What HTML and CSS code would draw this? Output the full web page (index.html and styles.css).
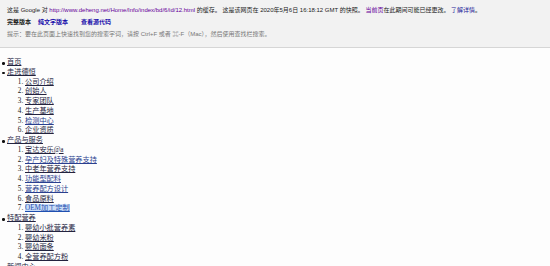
FILE: index.html
```html
<!DOCTYPE html>
<html lang="zh">
<head>
<meta charset="utf-8">
<title>德恒</title>
<link rel="stylesheet" href="styles.css">
</head>
<body>
<div class="cache-bar">
  <div class="cache-line">这是 Google 对 <a class="visited" href="#">http://www.deheng.net/Home/Info/index/bd/6/id/12.html</a> 的缓存。 这是该网页在 2020年5月6日 16:18:12 GMT 的快照。 <a class="visited" href="#">当前页</a>在此期间可能已经更改。 <a class="learn" href="#">了解详情</a>。</div>
  <div class="cache-line versions"><b>完整版本</b><a href="#">纯文字版本</a><a href="#">查看源代码</a></div>
  <div class="cache-line tip">提示：要在此页面上快速找到您的搜索字词，请按 Ctrl+F 或者 ⌘-F（Mac），然后使用查找栏搜索。</div>
</div>
<ul class="nav">
  <li><a href="#">首页</a></li>
  <li><a href="#">走进德恒</a>
    <ol>
      <li><a href="#">公司介绍</a></li>
      <li><a href="#">创始人</a></li>
      <li><a href="#">专家团队</a></li>
      <li><a href="#">生产基地</a></li>
      <li><a class="blue" href="#">检测中心</a></li>
      <li><a href="#">企业资质</a></li>
    </ol>
  </li>
  <li><a href="#">产品与服务</a>
    <ol>
      <li><a href="#">宝达安乐@a</a></li>
      <li><a class="blue" href="#">孕产妇及特殊营养支持</a></li>
      <li><a href="#">中老年营养支持</a></li>
      <li><a class="blue" href="#">功能型配料</a></li>
      <li><a class="blue" href="#">营养配方设计</a></li>
      <li><a href="#">食品原料</a></li>
      <li><a class="sel" href="#">OEM加工定制</a></li>
    </ol>
  </li>
  <li><a href="#">特配营养</a>
    <ol>
      <li><a href="#">婴幼小批营养素</a></li>
      <li><a href="#">婴幼米粉</a></li>
      <li><a href="#">婴幼面条</a></li>
      <li><a href="#">全营养配方粉</a></li>
    </ol>
  </li>
  <li><a href="#">新闻中心</a></li>
</ul>
</body>
</html>
```
FILE: styles.css
```css
html, body {
  margin: 0;
  padding: 0;
  background: #fdfdfd;
}
body {
  font-family: "Liberation Serif", "Noto Sans CJK SC", serif;
  color: #222;
}
.cache-bar {
  background: #f2f2f2;
  border-bottom: 1px solid #d6d6d6;
  padding: 4px 7px 6px;
  font-family: "Liberation Sans", "Noto Sans CJK SC", sans-serif;
  font-size: 6px;
  line-height: 12px;
  height: 37px;
  color: #222;
}
.cache-line a {
  text-decoration: none;
}
.cache-line a.visited {
  color: #660099;
}
.cache-line a.learn {
  color: #1a1a99;
}
.versions {
  display: flex;
}
.versions b {
  margin-right: 7px;
}
.versions a {
  color: #1a0dab;
  font-weight: bold;
  margin-right: 13px;
}
.tip {
  color: #777;
}
.nav {
  margin: 10px 0 0;
  padding-left: 7px;
  font-size: 7.2px;
  line-height: 9.75px;
  list-style: none;
}
.nav > li {
  position: relative;
}
.nav > li::before {
  content: "";
  position: absolute;
  left: -5px;
  top: 4px;
  width: 2.5px;
  height: 2.5px;
  border-radius: 50%;
  background: #111;
}
.nav ol {
  margin: 0;
  padding-left: 18px;
  list-style: decimal;
}
.nav a {
  color: #23233f;
  text-decoration: underline;
}
.nav a.blue {
  color: #2a3f8f;
}
.nav a.sel {
  color: #1f4fb0;
  background: #c9dcf6;
}
```
